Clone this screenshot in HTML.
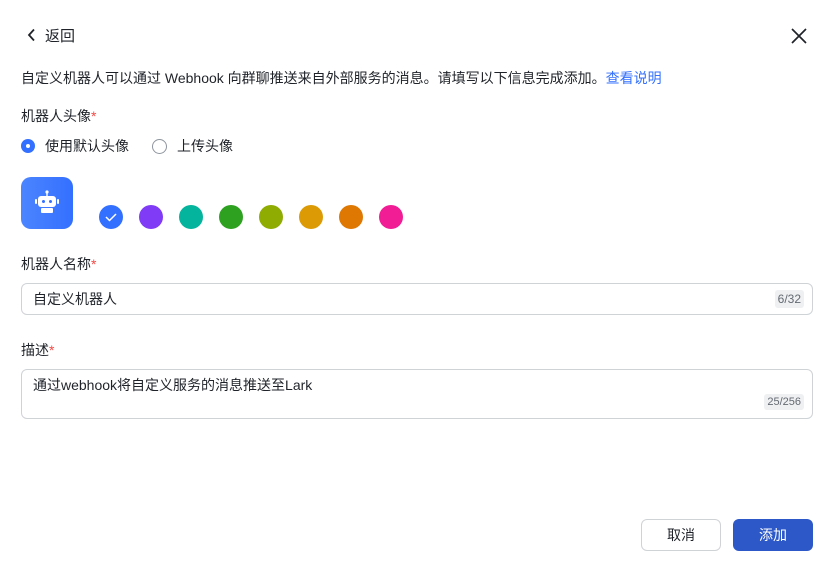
<!DOCTYPE html>
<html><head><meta charset="utf-8"><style>
body{margin:0;width:831px;height:570px;background:#fff;font-family:"Liberation Sans","Noto Sans CJK SC",sans-serif;color:#1f2329;position:relative;overflow:hidden}
.a{position:absolute;white-space:nowrap}
.req{color:#f54a45}
.dot{position:absolute;top:205px;width:24px;height:24px;border-radius:50%}
.box{position:absolute;left:21px;width:790px;border:1px solid #d0d3d6;border-radius:6px;background:#fff}
.cnt{position:absolute;background:#eff0f1;color:#646a73;font-size:12px;border-radius:3px;padding:2px 3px}
</style></head><body>
<svg class="a" style="left:26px;top:28px" width="12" height="14" viewBox="0 0 12 14"><path d="M8 1.5L3 7l5 5.5" fill="none" stroke="#1f2329" stroke-width="1.8"/></svg>
<div class="a" style="left:45px;top:25px;font-size:15px">返回</div>
<svg class="a" style="left:790px;top:27px" width="18" height="18" viewBox="0 0 18 18"><path d="M2 2L16 16M16 2L2 16" stroke="#1f2329" stroke-width="1.7"/></svg>
<div class="a" style="left:21px;top:68px;font-size:14px;color:#1f2329">自定义机器人可以通过 Webhook 向群聊推送来自外部服务的消息。请填写以下信息完成添加。<span style="color:#3370ff">查看说明</span></div>
<div class="a" style="left:21px;top:106px;font-size:14px">机器人头像<span class="req">*</span></div>
<div class="a" style="left:21px;top:139px;width:14px;height:14px;border-radius:50%;background:#3370ff"><div style="position:absolute;left:5px;top:5px;width:4px;height:4px;border-radius:50%;background:#fff"></div></div>
<div class="a" style="left:45px;top:136px;font-size:14px">使用默认头像</div>
<div class="a" style="left:152px;top:139px;width:15px;height:15px;border-radius:50%;border:1px solid #8f959e;box-sizing:border-box"></div>
<div class="a" style="left:177px;top:136px;font-size:14px">上传头像</div>
<div class="a" style="left:21px;top:177px;width:52px;height:52px;border-radius:10px;background:linear-gradient(90deg,#4c85ff,#3370ff)">
<svg width="52" height="52" viewBox="0 0 52 52"><circle cx="26" cy="15" r="1.6" fill="#fff"/><rect x="25.3" y="15" width="1.4" height="4" fill="#fff"/><rect x="17" y="19" width="18" height="11" rx="3" fill="#fff"/><rect x="14" y="22" width="2" height="5" rx="1" fill="#fff"/><rect x="36" y="22" width="2" height="5" rx="1" fill="#fff"/><circle cx="22.5" cy="24.5" r="1.5" fill="#3370ff"/><circle cx="29.5" cy="24.5" r="1.5" fill="#3370ff"/><rect x="20" y="31" width="12" height="5" rx="1" fill="#fff"/></svg></div>
<div class="dot" style="left:99px;background:#3370ff"><svg width="24" height="24"><path d="M7 12l3.5 3.5L17 9" fill="none" stroke="#fff" stroke-width="1.5"/></svg></div>
<div class="dot" style="left:139px;background:#7f3bf5"></div>
<div class="dot" style="left:179px;background:#04b49c"></div>
<div class="dot" style="left:219px;background:#2ea121"></div>
<div class="dot" style="left:259px;background:#8fac02"></div>
<div class="dot" style="left:299px;background:#dc9b04"></div>
<div class="dot" style="left:339px;background:#de7802"></div>
<div class="dot" style="left:379px;background:#f01d94"></div>
<div class="a" style="left:21px;top:254px;font-size:14px">机器人名称<span class="req">*</span></div>
<div class="box" style="top:283px;height:30px"><div class="a" style="left:11px;top:5px;font-size:14px">自定义机器人</div><div class="cnt" style="right:8px;top:6px">6/32</div></div>
<div class="a" style="left:21px;top:340px;font-size:14px">描述<span class="req">*</span></div>
<div class="box" style="top:369px;height:48px"><div class="a" style="left:11px;top:5px;font-size:14px">通过webhook将自定义服务的消息推送至Lark</div><div class="cnt" style="right:8px;top:24px;font-size:11px">25/256</div></div>
<div class="a" style="left:641px;top:519px;width:78px;height:30px;border:1px solid #d0d3d6;border-radius:6px;text-align:center;line-height:30px;font-size:14px">取消</div>
<div class="a" style="left:733px;top:519px;width:80px;height:32px;border-radius:6px;background:#2c58c8;color:#fff;text-align:center;line-height:32px;font-size:14px">添加</div>
</body></html>
